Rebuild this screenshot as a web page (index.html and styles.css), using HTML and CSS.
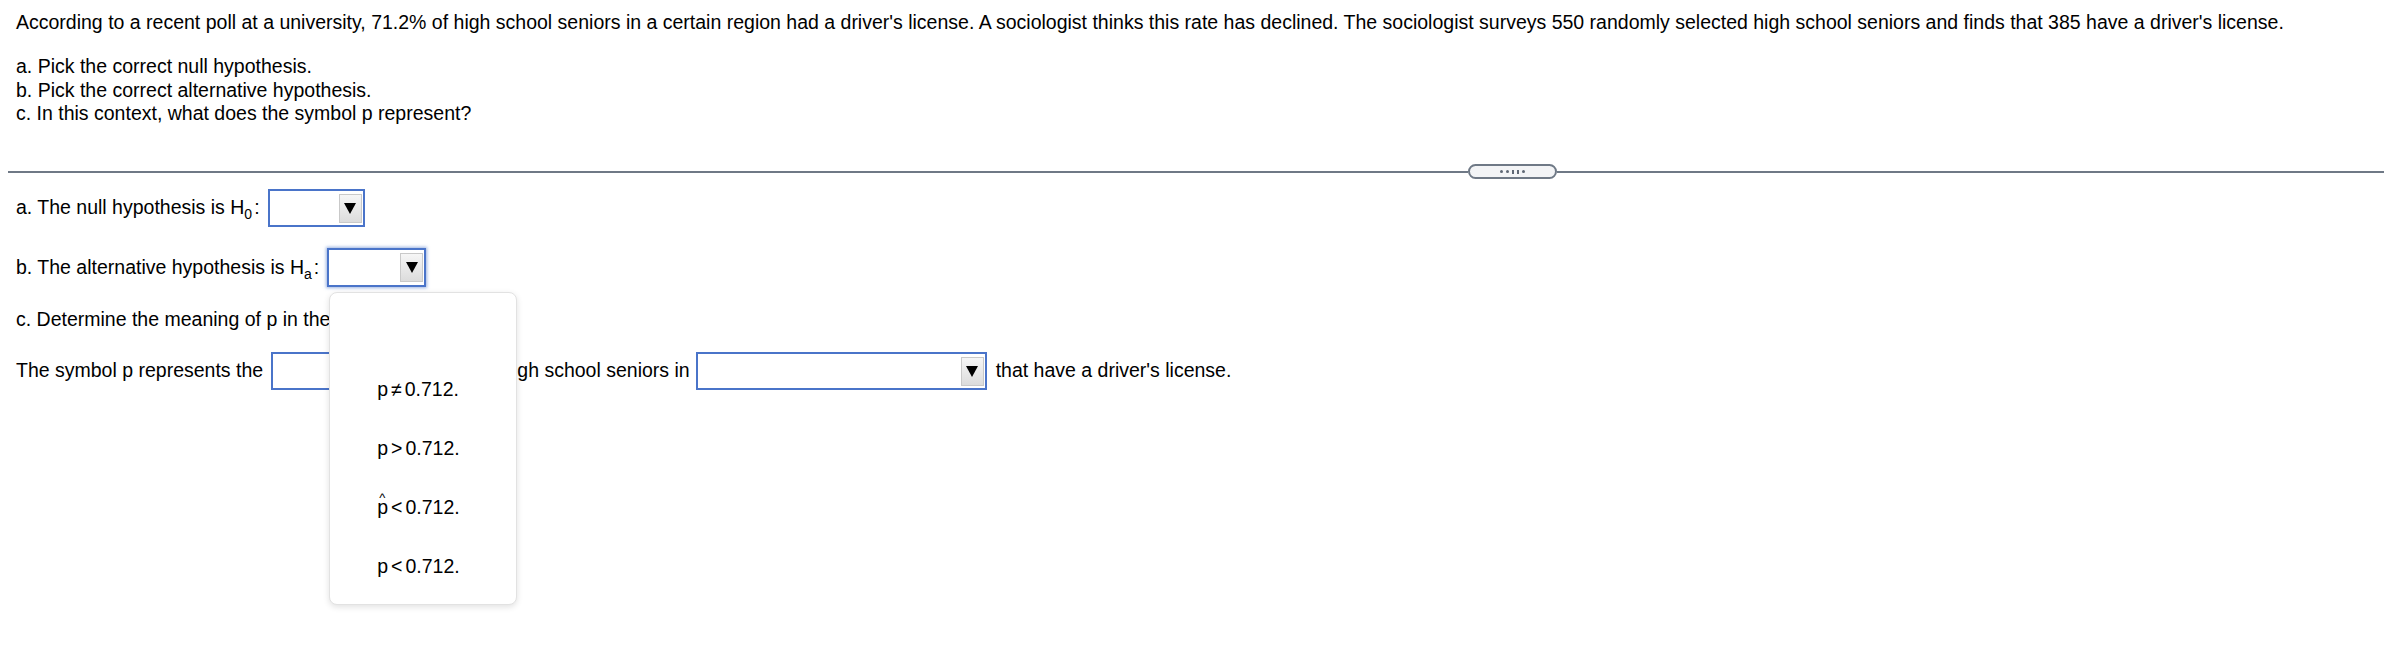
FILE: index.html
```html
<!DOCTYPE html>
<html lang="en">
<head>
    <meta charset="UTF-8">
    <meta name="viewport" content="width=device-width, initial-scale=1.0">
    <title>Hypothesis Test</title>
    <link rel="stylesheet" href="styles.css">
</head>
<body>

    <div class="question">
        <p class="intro">According to a recent poll at a university, 71.2% of high school seniors in a certain region had a driver's license. A sociologist thinks this rate has declined. The sociologist surveys 550 randomly selected high school seniors and finds that 385 have a driver's license.</p>
        <div class="parts">
            <div>a. Pick the correct null hypothesis.</div>
            <div>b. Pick the correct alternative hypothesis.</div>
            <div>c. In this context, what does the symbol p represent?</div>
        </div>
    </div>

    <div class="divider">
        <span class="rule rule-left"></span>
        <span class="pill">
            <i class="dot"></i><i class="dot"></i><i class="bar"></i><i class="bar"></i><i class="dot"></i>
        </span>
        <span class="rule rule-right"></span>
    </div>

    <div class="answers">
        <div class="row">
            <span>a. The null hypothesis is H<sub>0</sub><span class="colon">:</span></span>
            <span class="select select-a">
                <span class="arrow"><svg width="12" height="12" viewBox="0 0 12 12"><polygon points="0,1 12,1 6,12" fill="#000"/></svg></span>
            </span>
        </div>

        <div class="row row-b">
            <span>b. The alternative hypothesis is H<sub>a</sub><span class="colon">:</span></span>
            <span class="select select-b focused">
                <span class="arrow"><svg width="12" height="12" viewBox="0 0 12 12"><polygon points="0,1 12,1 6,12" fill="#000"/></svg></span>
                <div class="menu">
                    <div class="option"></div>
                    <div class="option">p<span class="rel">≠</span>0.712.</div>
                    <div class="option">p<span class="rel">&gt;</span>0.712.</div>
                    <div class="option"><span class="hat">p</span><span class="rel">&lt;</span>0.712.</div>
                    <div class="option">p<span class="rel">&lt;</span>0.712.</div>
                </div>
            </span>
        </div>

        <div class="row text-row">
            <span>c. Determine the meaning of p in the context.</span>
        </div>

        <div class="row">
            <span>The symbol p represents the</span>
            <span class="select select-c"></span>
            <span class="gap-text">high school seniors in</span>
            <span class="select select-d">
                <span class="arrow"><svg width="12" height="12" viewBox="0 0 12 12"><polygon points="0,1 12,1 6,12" fill="#000"/></svg></span>
            </span>
            <span class="gap-text">that have a driver's license.</span>
        </div>
    </div>

</body>
</html>
```

FILE: styles.css
```css
html, body {
    height: 100%;
}

body {
    font-family: "Liberation Sans", Arial, sans-serif;
    font-size: 19.5px;
    color: #000;
    background: #fff;
    margin: 0;
    padding: 11px 0 0 8px;
    box-sizing: border-box;
}

.question {
    padding-left: 8px;
}

.intro {
    margin: 0 0 21px 0;
    line-height: 23px;
}

.parts {
    line-height: 23.5px;
}

/* divider with the little pill in the middle */
.divider {
    display: flex;
    align-items: center;
    margin-top: 38px;
    height: 16px;
}

.rule {
    height: 2px;
    background-color: #6f7986;
}

.rule-left {
    flex: 0 0 1460px;
}

.rule-right {
    flex: 1;
}

.pill {
    flex: 0 0 89px;
    height: 15px;
    box-sizing: border-box;
    border: 2px solid #6f7986;
    border-radius: 8px;
    background-color: #f3f4f6;
    display: flex;
    justify-content: center;
    align-items: center;
    gap: 3px;
}

.pill .dot {
    width: 3px;
    height: 3px;
    border-radius: 50%;
    background-color: #5f6875;
}

.pill .bar {
    width: 2px;
    height: 4px;
    background-color: #5f6875;
}

/* answer rows */
.answers {
    padding-left: 8px;
    margin-top: 9px;
    display: flex;
    flex-direction: column;
    gap: 21px;
}

.row {
    display: flex;
    align-items: center;
    height: 38px;
    line-height: 23px;
}

.row-b {
    height: 39px;
}

.text-row {
    height: 23px;
}

sub {
    font-size: 14px;
    vertical-align: -5px;
    line-height: 0;
}

.colon {
    margin-left: 2px;
}

.select {
    position: relative;
    display: inline-block;
    box-sizing: border-box;
    height: 38px;
    border: 2px solid #4a74c9;
    background: #fff;
    margin-left: 8px;
}

.select-a {
    width: 97px;
}

.select-b {
    width: 99px;
    height: 39px;
}

.select-c {
    width: 224px;
}

.select-d {
    width: 291px;
    margin-left: 6px;
}

.focused {
    box-shadow: 0 0 3px 1px rgba(74, 116, 201, 0.55);
}

.arrow {
    position: absolute;
    right: 1px;
    top: 3px;
    width: 23px;
    height: 29px;
    box-sizing: border-box;
    border: 1px solid #c9c9c9;
    background: linear-gradient(#f6f6f6, #dcdcdc);
    display: flex;
    align-items: center;
    justify-content: center;
}

.gap-text {
    margin-left: 7px;
}

.select-d + .gap-text {
    margin-left: 9px;
}

/* open dropdown */
.menu {
    position: absolute;
    left: 0;
    top: 42px;
    width: 188px;
    height: 313px;
    box-sizing: border-box;
    padding-top: 8px;
    background-color: #fff;
    border: 1px solid #e2e2e2;
    border-radius: 8px;
    box-shadow: 0 2px 6px rgba(0, 0, 0, 0.12);
    z-index: 10;
}

.option {
    height: 59px;
    line-height: 59px;
    padding-left: 47px;
}

.rel {
    margin: 0 3px;
}

.hat {
    position: relative;
}

.hat::before {
    content: "^";
    position: absolute;
    left: 2px;
    top: -5px;
    font-size: 13px;
    line-height: 13px;
}
```
